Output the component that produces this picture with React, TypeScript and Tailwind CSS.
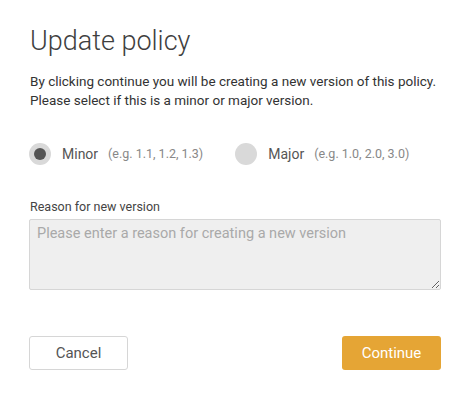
import { useState } from "react";

export default function App() {
  const [version, setVersion] = useState<"minor" | "major">("minor");

  return (
    <main className="min-h-screen w-[470px] bg-white px-[29px] pt-[24px] font-['Roboto',sans-serif]">
      {/* TITLE */}
      <h1 className="text-[27px] leading-[34px] font-light text-[#3f3f3f] pl-[1px]">
        Update policy
      </h1>

      <p className="mt-[14px] text-[13.5px] leading-[19px] text-[#333] pl-[1px]">
        By clicking continue you will be creating a new version of this policy.
        <br />
        Please select if this is a minor or major version.
      </p>

      {/* VERSION */}
      <div className="mt-[33px] flex items-center">
        <Radio
          label="Minor"
          hint="(e.g. 1.1, 1.2, 1.3)"
          checked={version === "minor"}
          onClick={() => setVersion("minor")}
        />
        <div className="w-[32px]" />
        <Radio
          label="Major"
          hint="(e.g. 1.0, 2.0, 3.0)"
          checked={version === "major"}
          onClick={() => setVersion("major")}
        />
      </div>

      {/* REASON */}
      <label className="mt-[34px] block text-[12.5px] leading-[16px] text-[#444] pl-[1px]">
        Reason for new version
      </label>
      <textarea
        placeholder="Please enter a reason for creating a new version"
        className="mt-[4px] block w-[412px] h-[71px] bg-[#efefef] border border-[#d6d6d6] rounded-[2px] px-[7px] py-[4px] text-[14.5px] leading-[20px] text-[#333] placeholder:text-[#a9a9a9] outline-none"
      />

      {/* ACTIONS */}
      <div className="mt-[46px] flex justify-between w-[412px]">
        <button className="w-[99px] h-[34px] rounded-[3px] border border-[#d6d6d6] bg-white text-[15px] text-[#555]">
          Cancel
        </button>
        <button className="w-[99px] h-[34px] rounded-[3px] bg-[#e5a535] text-[15px] text-white">
          Continue
        </button>
      </div>
    </main>
  );
}

function Radio({
  label,
  hint,
  checked,
  onClick,
}: {
  label: string;
  hint: string;
  checked: boolean;
  onClick: () => void;
}) {
  return (
    <button onClick={onClick} className="flex items-center">
      <span className="w-[22px] h-[22px] rounded-full bg-[#d9d9d9] flex items-center justify-center">
        {checked && <span className="w-[12px] h-[12px] rounded-full bg-[#555]" />}
      </span>
      <span className="ml-[11px] text-[14px] text-[#555]">{label}</span>
      <span className="ml-[10px] text-[12.5px] text-[#888]">{hint}</span>
    </button>
  );
}
